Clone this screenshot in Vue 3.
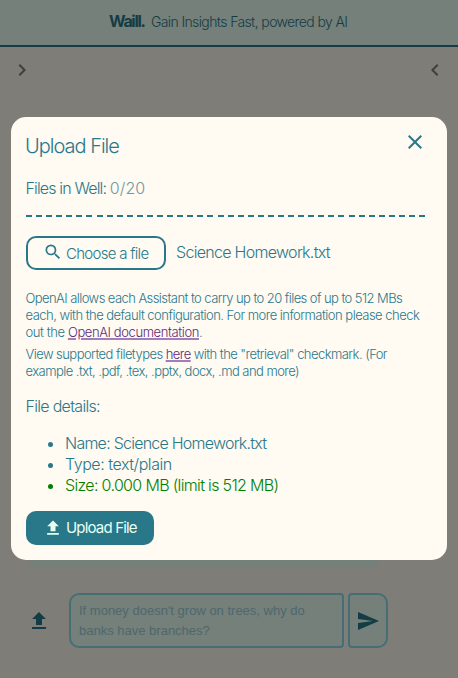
<script setup>
const details = [
  { cls: 'd-name', text: 'Name: Science Homework.txt' },
  { cls: 'd-type', text: 'Type: text/plain' },
  { cls: 'd-size', text: 'Size: 0.000 MB (limit is 512 MB)' },
]
</script>

<template>
  <div class="page">
    <header class="topbar">
      <span class="brand">Waill.</span>
      <span class="tagline">Gain Insights Fast, powered by AI</span>
    </header>
    <nav class="arrows">
      <svg width="24" height="24" viewBox="0 0 24 24"><path d="M10 6 8.59 7.41 13.17 12l-4.58 4.59L10 18l6-6z" /></svg>
      <svg width="24" height="24" viewBox="0 0 24 24"><path d="M15.41 7.41 14 6l-6 6 6 6 1.41-1.41L10.83 12z" /></svg>
    </nav>
    <main class="chat"><div class="message"></div></main>
    <footer class="composer">
      <svg class="attach" width="24" height="24" viewBox="0 0 24 24"><path d="M5 20h14v-2H5v2zm0-10h4v6h6v-6h4l-7-7-7 7z" /></svg>
      <div class="prompt">If money doesn't grow on trees, why do<br />banks have branches?</div>
      <button class="send"><svg width="24" height="24" viewBox="0 0 24 24"><path d="M2.01 21 23 12 2.01 3 2 10l15 2-15 2z" /></svg></button>
    </footer>

    <section class="modal">
      <div class="head">
        <h2>Upload File</h2>
        <svg class="close" width="24" height="24" viewBox="0 0 24 24"><path d="M19 6.41 17.59 5 12 10.59 6.41 5 5 6.41 10.59 12 5 17.59 6.41 19 12 13.41 17.59 19 19 17.59 13.41 12z" /></svg>
      </div>
      <p class="count">Files in Well: <span>0/20</span></p>
      <div class="rule"></div>
      <div class="picker">
        <button class="choose">
          <svg width="20" height="20" viewBox="0 0 24 24"><path d="M15.5 14h-.79l-.28-.27A6.471 6.471 0 0 0 16 9.5 6.5 6.5 0 1 0 9.5 16c1.61 0 3.09-.59 4.23-1.57l.27.28v.79l5 4.99L20.49 19l-4.99-5zm-6 0C7.01 14 5 11.99 5 9.5S7.01 5 9.5 5 14 7.01 14 9.5 11.99 14 9.5 14z" /></svg>
          <span>Choose a file</span>
        </button>
        <span class="filename">Science Homework.txt</span>
      </div>
      <p class="note">
        <span class="l1">OpenAI allows each Assistant to carry up to 20 files of up to 512 MBs</span><br />
        <span class="l2">each, with the default configuration. For more information please check</span><br />
        <span class="l3">out the <a>OpenAI documentation</a>.</span>
      </p>
      <p class="note second">
        <span class="l4">View supported filetypes <a>here</a> with the "retrieval" checkmark. (For</span><br />
        <span class="l5">example .txt, .pdf, .tex, .pptx, docx, .md and more)</span>
      </p>
      <p class="details">File details:</p>
      <ul>
        <li v-for="d in details" :key="d.cls" :class="d.cls"><span>{{ d.text }}</span></li>
      </ul>
      <button class="upload">
        <svg width="20" height="20" viewBox="0 0 24 24"><path d="M5 20h14v-2H5v2zm0-10h4v6h6v-6h4l-7-7-7 7z" /></svg>
        <span>Upload File</span>
      </button>
    </section>
  </div>
</template>

<style>
body { margin: 0; background: #7f7d78; }
</style>

<style scoped>
* { box-sizing: border-box; }
.page { position: relative; width: 458px; height: 678px; overflow: hidden; display: flex; flex-direction: column; background: #7f7d78; font-family: Inter, "Liberation Sans", sans-serif; font-weight: 300; color: #28788a; }
svg { display: block; fill: currentColor; flex: none; }
button { font: inherit; color: inherit; margin: 0; padding: 0; }
.topbar { height: 47px; flex: none; background: #748079; border-bottom: 2px solid #143c45; color: #143c45; display: flex; justify-content: center; align-items: center; gap: 6px; padding: 0 1px 3px 0; white-space: nowrap; }
.brand { font-size: 16px; font-weight: 700; letter-spacing: -1.3px; width: 36px; }
.tagline { font-size: 14px; font-weight: 300; letter-spacing: -.62px; width: 197px; }
.arrows { display: flex; justify-content: space-between; padding: 11px 11px 0 10px; color: #403f3d; }
.chat { flex: 1; display: flex; flex-direction: column; justify-content: flex-end; padding: 0 78px 25px 29px; }
.message { height: 40px; background: #748079; border-radius: 0 0 10px 0; }
.composer { display: flex; align-items: center; height: 55px; margin-bottom: 30px; padding-left: 27px; color: #143c45; }
.attach { margin-right: 18px; }
.prompt { width: 275px; height: 55px; border: 2px solid #466e75; border-radius: 10px 4px 4px 10px; background: #748079; color: #4f676d; padding: 6px 8px; font: 400 13px/20px "Liberation Sans", sans-serif; white-space: nowrap; }
.send { width: 40px; height: 55px; margin-left: 4px; padding-left: 6px; border: 2px solid #466e75; border-radius: 4px 10px 10px 4px; background: #748079; color: #143c45; }
.modal { position: absolute; left: 11px; top: 116.5px; width: 436px; height: 443px; border-radius: 15px; background: #fffaf2; padding: 13px 15px 15px; display: flex; flex-direction: column; white-space: nowrap; }
.head { display: flex; justify-content: space-between; height: 32px; padding-right: 5px; }
h2 { margin: 0 0 0 -1px; font-size: 20px; line-height: 32px; font-weight: 300; letter-spacing: -1px; }
p { margin: 0; }
.count { margin: 15px 0 0 -.5px; font-size: 16px; line-height: 22px; letter-spacing: -.85px; }
.count span { color: #7098a0; letter-spacing: .1px; }
.rule { margin-top: 16.5px; height: 2px; width: 399px; background: repeating-linear-gradient(90deg, #28788a 0 6px, transparent 6px 10.08px); }
.picker { display: flex; align-items: center; margin-top: 18.5px; height: 34px; }
.choose { width: 140px; height: 34px; border: 2px solid #28788a; border-radius: 10px; background: transparent; display: flex; align-items: center; padding-left: 15px; gap: 3px; font-size: 15px; letter-spacing: -.7px; }
.choose svg { margin-top: -1px; }
.choose span { padding-top: 1px; }
.filename { margin: -2px 0 0 10px; font-size: 16px; letter-spacing: -.7px; }
.note { margin: 20.5px 0 0 -.5px; font-size: 13px; line-height: 17px; letter-spacing: -.5px; }
.note.second { margin-top: 5px; }
.l1 { letter-spacing: -.57px; }
.l2 { letter-spacing: -.52px; }
.l3 { letter-spacing: -.4px; }
.l4 { letter-spacing: -.55px; }
.l5 { letter-spacing: -.55px; }
a { color: #602878; text-decoration: underline; text-decoration-color: #a37dba; text-decoration-thickness: 2px; text-underline-offset: 1px; }
.details { margin: 14.5px 0 0 -.5px; font-size: 16px; line-height: 22px; letter-spacing: -.7px; }
ul { margin: 16px 0 0; padding-left: 39px; font-size: 16px; line-height: 21px; }
.d-name { letter-spacing: -.76px; }
.d-type { letter-spacing: -.45px; }
.d-size { color: #008000; letter-spacing: -.66px; }
.upload { flex: none; margin-top: 15px; width: 128px; height: 34px; border: 0; border-radius: 10px; background: #28788a; color: #eafff2; display: flex; align-items: center; padding-left: 17px; gap: 3px; font-size: 15px; font-weight: 400; letter-spacing: -.82px; }
</style>
